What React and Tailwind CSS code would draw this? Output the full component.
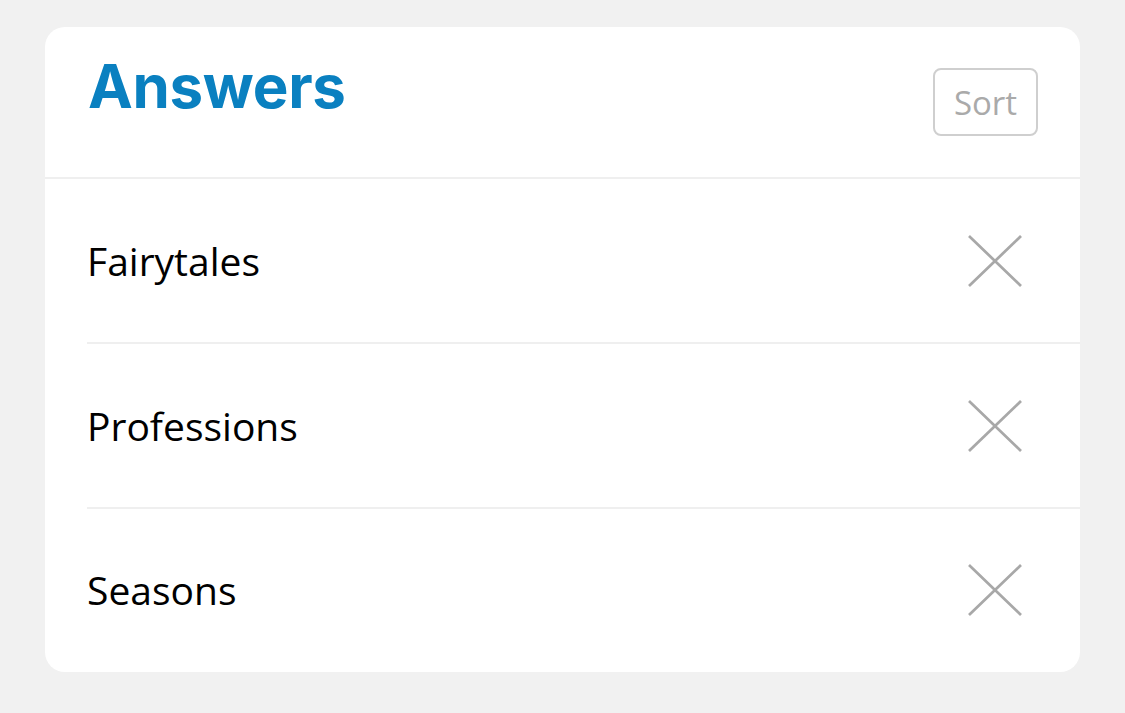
import React from 'react';

const answers = ['Fairytales', 'Professions', 'Seasons'];

function CloseIcon() {
  return (
    <svg width="56" height="52" viewBox="0 0 56 52" className="shrink-0">
      <line x1="3" y1="2" x2="53" y2="50" stroke="#a8a8a8" strokeWidth="2.75" strokeLinecap="square" />
      <line x1="53" y1="2" x2="3" y2="50" stroke="#a8a8a8" strokeWidth="2.75" strokeLinecap="square" />
    </svg>
  );
}

export default function App() {
  return (
    <div className="min-h-[713px] bg-[#f1f1f1] pt-[27px] pl-[45px] pr-[45px]">
      <div className="w-[1035px] bg-white rounded-[20px]">
        <div className="h-[152px] flex items-start justify-between pl-[43px] pr-[42px] border-b-2 border-[#efefef]">
          <h1
            className="text-[#0a80c0] font-bold text-[60px] leading-none mt-[29px] tracking-[-0.3px]"
            style={{ fontFamily: 'Inter, "Liberation Sans", sans-serif' }}
          >
            Answers
          </h1>
          <button
            className="mt-[41px] w-[105px] h-[68px] border-2 border-[#cfcfcf] rounded-[8px] text-[#aaaaaa] text-[33px] leading-none"
            style={{ fontFamily: '"Open Sans", sans-serif' }}
          >
            Sort
          </button>
        </div>
        <div className="pl-[42px]">
          {answers.map((a, i) => (
            <div
              key={a}
              className={
                'flex items-center justify-between pr-[57px] ' +
                (i < answers.length - 1 ? 'h-[165px] border-b-2 border-[#efefef]' : 'h-[163px] pb-[2px]')
              }
            >
              <span
                className="text-black text-[39px] leading-none"
                style={{ fontFamily: '"Open Sans", sans-serif' }}
              >
                {a}
              </span>
              <CloseIcon />
            </div>
          ))}
        </div>
      </div>
    </div>
  );
}
